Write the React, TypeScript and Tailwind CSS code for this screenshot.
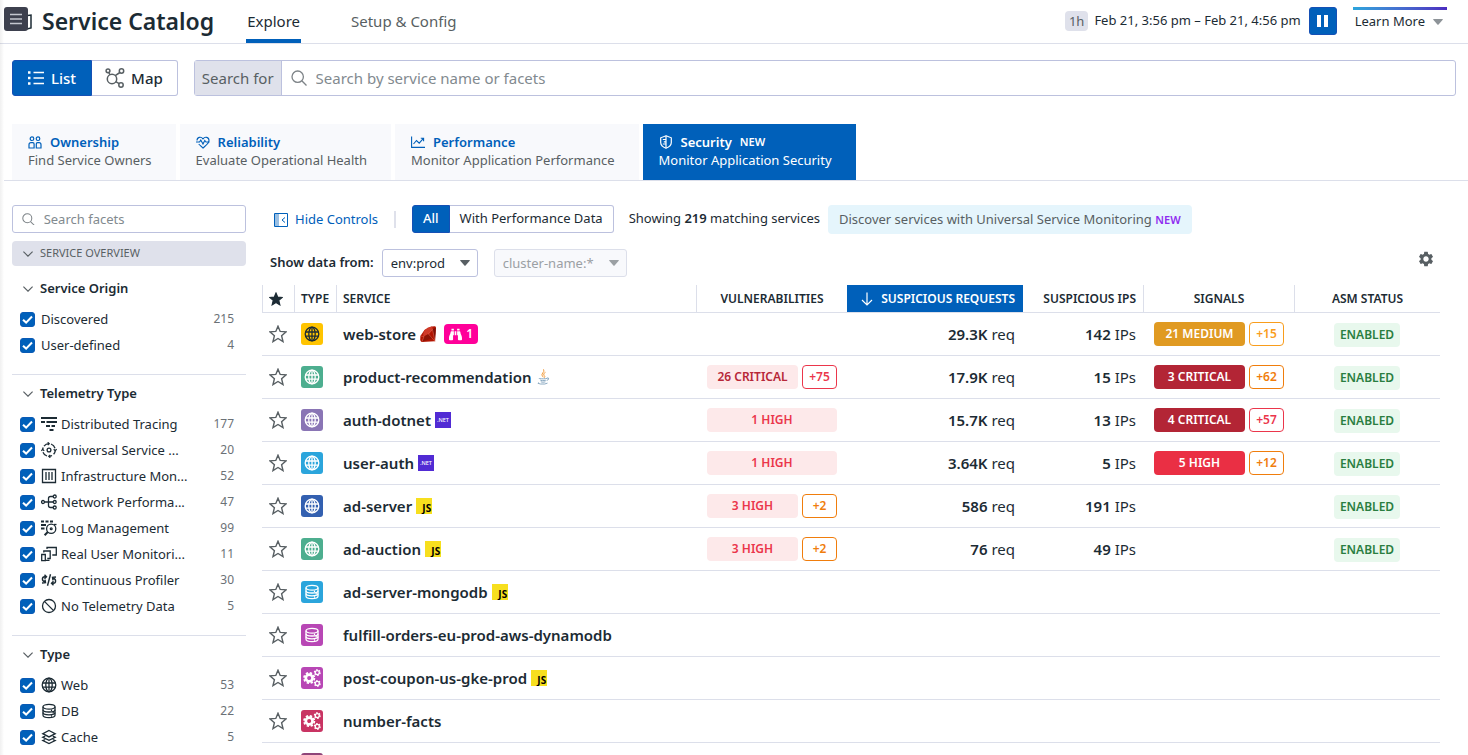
import type { ReactNode } from "react";
import { FaBinoculars } from "react-icons/fa";
import { MdSettings } from "react-icons/md";

type IconProps = { className?: string };

const stroke = {
  fill: "none",
  stroke: "currentColor",
  strokeWidth: 1.3,
} as const;

function GlobeIcon({ className }: IconProps) {
  return (
    <svg viewBox="0 0 16 16" className={className} {...stroke} aria-hidden="true">
      <circle cx="8" cy="8" r="6.8" />
      <ellipse cx="8" cy="8" rx="3.2" ry="6.8" />
      <path d="M8 1.2v13.6M1.5 6h13M1.5 10.2h13" />
    </svg>
  );
}

function DatabaseIcon({ className }: IconProps) {
  return (
    <svg viewBox="0 0 16 16" className={className} {...stroke} aria-hidden="true">
      <ellipse cx="8" cy="3.7" rx="6" ry="2.4" />
      <path d="M2 3.7v8.6c0 1.3 2.7 2.4 6 2.4s6-1.1 6-2.4V3.7" />
      <path d="M2 6.7c0 1.3 2.7 2.3 6 2.3s6-1 6-2.3M2 9.6c0 1.3 2.7 2.3 6 2.3s6-1 6-2.3" />
      <path d="M10.5 6.5v1.500M12.200 9v1.500M10.500 12.200v1.500" strokeWidth="1.200" />
    </svg>
  );
}

function GearsIcon({ className }: IconProps) {
  return (
    <svg viewBox="0 0 16 16" className={className} fill="none" stroke="currentColor" aria-hidden="true">
      <circle cx="5.500" cy="8" r="3" strokeWidth="2.400" />
      <circle cx="5.500" cy="8" r="4.600" strokeWidth="1.600" strokeDasharray="2.100 1.510" />
      <circle cx="12.700" cy="3.200" r="1.800" strokeWidth="1.200" />
      <circle cx="12.700" cy="3.200" r="2.600" strokeWidth="1" strokeDasharray="1.350 1.370" />
      <circle cx="12.700" cy="12.800" r="1.800" strokeWidth="1.200" />
      <circle cx="12.700" cy="12.800" r="2.600" strokeWidth="1" strokeDasharray="1.350 1.370" />
    </svg>
  );
}

function LayersIcon({ className }: IconProps) {
  return (
    <svg viewBox="0 0 16 16" className={className} {...stroke} aria-hidden="true">
      <path d="M8 1.5 14.2 4.700 8 7.900 1.800 4.700Z" />
      <path d="M4.200 7.200 1.800 8.300 8 11.300l6.200-3-2.400-1.100M4.200 10.500l-2.400 1.100L8 14.600l6.200-3-2.400-1.100" />
    </svg>
  );
}

function TracingIcon({ className }: IconProps) {
  return (
    <svg viewBox="0 0 16 16" className={className} fill="none" stroke="currentColor" strokeWidth="1.800" aria-hidden="true">
      <path d="M0 2h16M0 6h4M5.500 6H16M5 10h4M10.500 10H14M8.500 14h4" />
    </svg>
  );
}

function UniversalIcon({ className }: IconProps) {
  return (
    <svg viewBox="0 0 16 16" className={className} {...stroke} aria-hidden="true">
      <circle cx="8" cy="8" r="1.900" />
      <path d="M3 4.200A6.300 6.300 0 0 1 8 1.700M10 2A6.300 6.300 0 0 1 14 6.200M14.300 8.500a6.300 6.300 0 0 1-1.700 3.800M11 13.500A6.300 6.300 0 0 1 8 14.300M6 14A6.300 6.300 0 0 1 2 10.200M1.700 7.500a6.300 6.300 0 0 1 .500-2" />
      <path d="M6.700.3 8.200 1.700 6.700 3.100M15.700 7.200 14.200 8.700l-1.500-1.500M9.300 15.700 7.800 14.300l1.500-1.400M.3 8.900 1.700 7.400l1.500 1.500" />
    </svg>
  );
}

function InfraIcon({ className }: IconProps) {
  return (
    <svg viewBox="0 0 16 16" className={className} {...stroke} aria-hidden="true">
      <path d="M1.500 1.500h13v13h-13zM5 4v8M8 4v8M11 4v8" />
    </svg>
  );
}

function NetworkIcon({ className }: IconProps) {
  return (
    <svg viewBox="0 0 16 16" className={className} {...stroke} aria-hidden="true">
      <circle cx="2" cy="8" r="1.500" />
      <circle cx="13.700" cy="2.500" r="1.500" />
      <circle cx="13.700" cy="8" r="1.500" />
      <circle cx="13.700" cy="13.500" r="1.500" />
      <path d="M3.500 8h8.700M12.200 2.500H9.500q-2 0-2 2v7q0 2 2 2h2.700" />
    </svg>
  );
}

function LogIcon({ className }: IconProps) {
  return (
    <svg viewBox="0 0 16 16" className={className} {...stroke} aria-hidden="true">
      <path d="M0 1.500h3M4.500 1.500h3M9 1.500h3M0 5h5M0 8.500h3.500" strokeWidth="1.800" />
      <circle cx="10.200" cy="8.700" r="4.600" />
      <path d="m6.800 12-3.200 3.200" strokeWidth="2" />
      <circle cx="10.200" cy="8.700" r=".9" />
      <path d="M13 4.500h2.500" />
    </svg>
  );
}

function RumIcon({ className }: IconProps) {
  return (
    <svg viewBox="0 0 16 16" className={className} {...stroke} aria-hidden="true">
      <path d="M.7 8.500h3.600v6.200H.700zM2.800 6.500V5h6.400v7.500H6.300M6 3V1.500h9.300V9h-4M4.500 14.300h4" />
    </svg>
  );
}

function ProfilerIcon({ className }: IconProps) {
  return (
    <svg viewBox="0 0 16 16" className={className} fill="none" stroke="currentColor" strokeWidth="1.400" aria-hidden="true">
      <path d="M9.500 2.300 6.500 13.700" />
      <path d="M5.300 4.700H3.700Q1.400 4.700 1.400 7t2.300 2.500M3.500 2.700l2 2-2 2M1 11l3.500-.3-.5-3" />
      <path d="M10.700 11.300h1.600q2.300 0 2.300-2.300t-2.300-2.500M12.500 13.300l-2-2 2-2M15 5l-3.500.3.500 3" />
    </svg>
  );
}

function NoneIcon({ className }: IconProps) {
  return (
    <svg viewBox="0 0 16 16" className={className} {...stroke} aria-hidden="true">
      <circle cx="8" cy="8" r="6.500" />
      <path d="m3.400 3.400 9.200 9.200" />
    </svg>
  );
}

function SearchIcon({ className }: IconProps) {
  return (
    <svg viewBox="0 0 16 16" className={className} fill="none" stroke="currentColor" strokeWidth="1.300" aria-hidden="true">
      <circle cx="6.700" cy="6.700" r="5.700" />
      <path d="m10.800 10.800 4.700 4.700" />
    </svg>
  );
}

function ChevronIcon({ className }: IconProps) {
  return (
    <svg viewBox="0 0 10 6" className={className} fill="none" stroke="currentColor" strokeWidth="1.200" aria-hidden="true">
      <path d="m.4.6 4.600 4.500L9.600.6" />
    </svg>
  );
}

function CaretIcon({ className }: IconProps) {
  return (
    <svg viewBox="0 0 10 6" className={className} fill="currentColor" aria-hidden="true">
      <path d="M.7 0h8.600q.9 0 .4.700L5.600 5.500q-.6.6-1.200 0L.3.700Q-.2 0 .7 0Z" />
    </svg>
  );
}

function StarIcon({ className, filled = false }: IconProps & { filled?: boolean }) {
  return (
    <svg
      viewBox="0 0 18 18"
      className={className}
      fill={filled ? "currentColor" : "none"}
      stroke="currentColor"
      strokeWidth="1.400"
      aria-hidden="true"
    >
      <path d="m9 1.200 2.200 5.200 5.900.500-4.500 3.800 1.400 5.900L9 13.500l-5 3.100 1.400-5.900L.9 6.900l5.900-.500Z" />
    </svg>
  );
}

function ListIcon({ className }: IconProps) {
  return (
    <svg viewBox="0 0 16 14" className={className} fill="none" stroke="currentColor" strokeWidth="1.300" aria-hidden="true">
      <path d="M0 1.500h2.500M0 7h2.500M0 12.500h2.500" strokeWidth="2.400" />
      <path d="M5.500 1.500H16M5.500 7H16M5.500 12.500H16" />
    </svg>
  );
}

function MapIcon({ className }: IconProps) {
  return (
    <svg viewBox="0 0 20 20" className={className} {...stroke} strokeWidth={1.500} aria-hidden="true">
      <circle cx="7" cy="11" r="4.700" />
      <circle cx="3" cy="2.800" r="1.900" />
      <circle cx="16.500" cy="3" r="2.200" />
      <circle cx="16" cy="17" r="2.200" />
      <path d="m3.800 4.500 1.100 2.300M10.200 7.600l4.700-3.100M10.700 13.700l3.500 2" />
    </svg>
  );
}

function OwnershipIcon({ className }: IconProps) {
  return (
    <svg viewBox="0 0 14 13" className={className} {...stroke} strokeWidth={1.200} aria-hidden="true">
      <circle cx="4" cy="2.700" r="1.800" />
      <circle cx="10" cy="2.700" r="1.800" />
      <path d="M1 12V8.700q0-2 2-2h1.800q1.300 0 1.300 1.300v4zM8.300 12H13V8.700q0-2-2-2H9.600q-1.300 0-1.300 1.300z" />
    </svg>
  );
}

function HeartIcon({ className }: IconProps) {
  return (
    <svg viewBox="0 0 14 13" className={className} {...stroke} strokeWidth={1.100} aria-hidden="true">
      <path d="M1 4.500C1 1 5 .2 7 2.800 9 .2 13 1 13 4.500c0 3-4 5.500-6 7.500-1.200-1.200-3-2.500-4.300-4" />
      <path d="M0 6h3.500l1.300-2 2.200 4 1.800-3.500L10 6h3.500" />
    </svg>
  );
}

function ChartIcon({ className }: IconProps) {
  return (
    <svg viewBox="0 0 14 12" className={className} {...stroke} strokeWidth={1.100} aria-hidden="true">
      <path d="M.6.5v10.900H14M2.500 8 5.500 4.500l2.700 2.700 4-4.500M9.800 2.300h2.800v2.900" />
    </svg>
  );
}

function ShieldIcon({ className }: IconProps) {
  return (
    <svg viewBox="0 0 14 14" className={className} {...stroke} strokeWidth={1.200} aria-hidden="true">
      <path d="M7 .8 12.300 2.800v4.700q0 3.800-5.300 5.700Q1.700 11.300 1.700 7.500V2.800Z" />
      <path d="M7 .8v12.400M3.800 4.500H7M4.800 6.800H7M3.800 9H7" />
    </svg>
  );
}

function HideControlsIcon({ className }: IconProps) {
  return (
    <svg viewBox="0 0 14 14" className={className} fill="none" stroke="currentColor" strokeWidth="1" aria-hidden="true">
      <path d="M1 1h4v12H1z" fill="currentColor" fillOpacity=".4" stroke="none" />
      <path d="M.5.5h13v13H.500zM11 4.500 8 7l3 2.500" />
    </svg>
  );
}

function RubyIcon() {
  return (
    <svg viewBox="0 0 16 16" className="size-4" aria-hidden="true">
      <path d="M11.500.4 15 .200q.9.300.9 1.200L15 15.300 1.600 16Q.2 15.600.2 13.600L.4 10 4.500 4Z" fill="#b11401" />
      <path d="M4.500 4Q8 .500 11.500.4q1.800.6 1 3L8.500 8 4 10.500Q2 9 4.500 4Z" fill="#cf3a28" />
      <path d="m12.500 3.400 3.400-2L15 15.300Z" fill="#7c0f05" />
      <path d="m4 10.500 4.500-2.500 4.500 4L2 15.700Z" fill="#8d1405" />
      <path d="M.4 10 4 10.500 2 15.700M8.500 8l4-4.600L15 15.300 8.500 8" fill="none" stroke="#e8755f" strokeWidth=".500" />
    </svg>
  );
}

function JavaIcon() {
  return (
    <svg viewBox="0 0 16 16" className="size-4" fill="none" aria-hidden="true">
      <path d="M8.500.3q1.300 2-.8 3.700t.6 4.300M10.500 3.300Q7.500 4.700 9 6.300t.4 2.400" stroke="#f0932b" strokeWidth=".9" />
      <path d="M4.500 9q-1.500.9 4 .8 2.500-.1 3.700-.5M5.300 11.200q1 .9 5.500.1M5.800 12.800q1.400.8 4.600.1M12 9q2-.4 1.700 1-.3 1-2 1.400M3.500 13.500q-2 .9 2 1.500 5 .5 7-.9" stroke="#7ea0bb" strokeWidth=".9" />
    </svg>
  );
}

function NetIcon() {
  return (
    <svg viewBox="0 0 16 16" className="size-4" aria-label=".NET">
      <rect width="16" height="16" fill="#512bd4" />
      <text x="8" y="10.200" textAnchor="middle" fontSize="5.500" fontFamily="Noto Sans, sans-serif" fontWeight="500" fill="#fff">
        .NET
      </text>
    </svg>
  );
}

function JsIcon() {
  return (
    <svg viewBox="0 0 16 16" className="size-4" aria-label="JS">
      <rect width="16" height="16" fill="#f7df1e" />
      <text x="15.200" y="14.300" textAnchor="end" fontSize="10" fontFamily="Noto Sans, sans-serif" fontWeight="700" fill="#000">
        JS
      </text>
    </svg>
  );
}

function Checkbox({ id }: { id: string }) {
  return (
    <span className="grid size-[15px] shrink-0">
      <input
        id={id}
        type="checkbox"
        defaultChecked
        className="peer col-start-1 row-start-1 size-[15px] appearance-none rounded-[3px] border border-[#bcc1de] checked:border-[#0a5ab5] checked:bg-[#0060ba]"
      />
      <svg
        viewBox="0 0 14 14"
        className="pointer-events-none invisible col-start-1 row-start-1 size-[15px] peer-checked:visible"
        fill="none"
        stroke="#fff"
        strokeWidth="1.900"
        aria-hidden="true"
      >
        <path d="m2.800 7.200 2.900 2.700 5.500-5.700" />
      </svg>
    </span>
  );
}

type Facet = { label: string; count: number; icon?: (p: IconProps) => ReactNode };

const facetGroups: { title: string; facets: Facet[] }[] = [
  {
    title: "Service Origin",
    facets: [
      { label: "Discovered", count: 215 },
      { label: "User-defined", count: 4 },
    ],
  },
  {
    title: "Telemetry Type",
    facets: [
      { label: "Distributed Tracing", count: 177, icon: TracingIcon },
      { label: "Universal Service ...", count: 20, icon: UniversalIcon },
      { label: "Infrastructure Mon...", count: 52, icon: InfraIcon },
      { label: "Network Performa...", count: 47, icon: NetworkIcon },
      { label: "Log Management", count: 99, icon: LogIcon },
      { label: "Real User Monitori...", count: 11, icon: RumIcon },
      { label: "Continuous Profiler", count: 30, icon: ProfilerIcon },
      { label: "No Telemetry Data", count: 5, icon: NoneIcon },
    ],
  },
  {
    title: "Type",
    facets: [
      { label: "Web", count: 53, icon: GlobeIcon },
      { label: "DB", count: 22, icon: DatabaseIcon },
      { label: "Cache", count: 5, icon: LayersIcon },
    ],
  },
];

function FacetGroup({ title, facets }: { title: string; facets: Facet[] }) {
  return (
    <section className="border-b border-[#dcdfea] pt-2 pb-4">
      <h2>
        <button type="button" className="flex h-[22px] items-center gap-[7px] pl-[11px] text-[13px] font-semibold">
          <ChevronIcon className="w-[10px] text-[#585f63]" />
          {title}
        </button>
      </h2>
      <ul className="mt-[6px]">
        {facets.map(({ label, count, icon: Icon }) => {
          const id = `${title}-${label}`.toLowerCase().replace(/[^a-z]+/g, "-");
          return (
            <li key={label} className="flex h-[26px] items-center pr-3 pl-2">
              <Checkbox id={id} />
              <label htmlFor={id} className="flex flex-1 items-center gap-1 pl-[6px] text-[13px] leading-[18px]">
                {Icon && <Icon className="size-4" />}
                {label}
              </label>
              <span className="text-xs text-[#6b7176]">{count}</span>
            </li>
          );
        })}
      </ul>
    </section>
  );
}

const viewTabs = [
  { title: "Ownership", text: "Find Service Owners", icon: OwnershipIcon },
  { title: "Reliability", text: "Evaluate Operational Health", icon: HeartIcon },
  { title: "Performance", text: "Monitor Application Performance", icon: ChartIcon },
  { title: "Security", text: "Monitor Application Security", icon: ShieldIcon, isNew: true, active: true },
];

type Badge = { label: string; tone: string; more?: string; moreTone?: string };
type Service = {
  name?: string;
  kind: "web" | "db" | "gears";
  tile: string;
  lang?: ReactNode;
  watchers?: number;
  vuln?: Badge;
  requests?: string;
  ips?: string;
  signal?: Badge;
};

const redOutline = "border-[#eb364b] text-[#eb364b]";
const orangeOutline = "border-[#f07d0c] text-[#f07d0c]";
const amberOutline = "border-[#f99d1c] text-[#f99d1c]";
const softHigh = "bg-[#fde9ea] text-[#eb364b]";
const softCritical = "bg-[#fde9ea] text-[#b72738]";
const critical = "bg-[#b32535] text-white";

const services: Service[] = [
  {
    name: "web-store", kind: "web", tile: "bg-[#ffc400] text-[#1c2b34]", lang: <RubyIcon />, watchers: 1,
    requests: "29.3K", ips: "142",
    signal: { label: "21 MEDIUM", tone: "bg-[#e09a22] text-white", more: "+15", moreTone: amberOutline },
  },
  {
    name: "product-recommendation", kind: "web", tile: "bg-[#4dae8f] text-white", lang: <JavaIcon />,
    vuln: { label: "26 CRITICAL", tone: softCritical, more: "+75", moreTone: redOutline },
    requests: "17.9K", ips: "15",
    signal: { label: "3 CRITICAL", tone: critical, more: "+62", moreTone: orangeOutline },
  },
  {
    name: "auth-dotnet", kind: "web", tile: "bg-[#8a75b5] text-white", lang: <NetIcon />,
    vuln: { label: "1 HIGH", tone: softHigh }, requests: "15.7K", ips: "13",
    signal: { label: "4 CRITICAL", tone: critical, more: "+57", moreTone: redOutline },
  },
  {
    name: "user-auth", kind: "web", tile: "bg-[#2ba5dc] text-white", lang: <NetIcon />,
    vuln: { label: "1 HIGH", tone: softHigh }, requests: "3.64K", ips: "5",
    signal: { label: "5 HIGH", tone: "bg-[#ea2f44] text-white", more: "+12", moreTone: orangeOutline },
  },
  {
    name: "ad-server", kind: "web", tile: "bg-[#3360b0] text-white", lang: <JsIcon />,
    vuln: { label: "3 HIGH", tone: softHigh, more: "+2", moreTone: orangeOutline }, requests: "586", ips: "191",
  },
  {
    name: "ad-auction", kind: "web", tile: "bg-[#4dae8f] text-white", lang: <JsIcon />,
    vuln: { label: "3 HIGH", tone: softHigh, more: "+2", moreTone: orangeOutline }, requests: "76", ips: "49",
  },
  { name: "ad-server-mongodb", kind: "db", tile: "bg-[#2ba5dc] text-white", lang: <JsIcon /> },
  { name: "fulfill-orders-eu-prod-aws-dynamodb", kind: "db", tile: "bg-[#b847b5] text-white" },
  { name: "post-coupon-us-gke-prod", kind: "gears", tile: "bg-[#b847b5] text-white", lang: <JsIcon /> },
  { name: "number-facts", kind: "gears", tile: "bg-[#c93463] text-white" },
  { kind: "gears", tile: "bg-[#8f4579] text-white" },
];

function BadgePair({ badge }: { badge?: Badge }) {
  if (!badge) return null;
  return (
    <div className="flex gap-1 pr-[10px] pl-[11px] text-xs leading-6 font-semibold">
      <span className={`h-6 flex-1 rounded text-center ${badge.tone}`}>{badge.label}</span>
      {badge.more && (
        <span className={`h-6 w-[35px] rounded border text-center leading-[22px] ${badge.moreTone}`}>{badge.more}</span>
      )}
    </div>
  );
}

function KindIcon({ kind }: { kind: Service["kind"] }) {
  if (kind === "web") return <GlobeIcon className="size-4" />;
  if (kind === "db") return <DatabaseIcon className="size-4" />;
  return <GearsIcon className="size-[18px]" />;
}

function ServiceTable() {
  return (
    <table className="mt-2 w-full table-fixed border-separate border-spacing-0">
      <colgroup>
        <col className="w-8" />
        <col className="w-[42px]" />
        <col />
        <col className="w-[151px]" />
        <col className="w-[176px]" />
        <col className="w-[120px]" />
        <col className="w-[151px]" />
        <col className="w-[146px]" />
      </colgroup>
      <thead>
        <tr className="h-7 text-xs *:border-b *:border-[#dcdfea]">
          <th className="border-l" aria-label="Favorite">
            <StarIcon filled className="ml-[6px] size-[14px]" />
          </th>
          <th className="border-l pl-[6px] text-left font-semibold">TYPE</th>
          <th className="border-l pl-[6px] text-left font-semibold">SERVICE</th>
          <th className="border-l font-semibold">VULNERABILITIES</th>
          <th className="bg-[#0060ba] pr-2 font-semibold text-white" aria-sort="descending">
            <button type="button" className="flex w-full items-center justify-end gap-2">
              <svg viewBox="0 0 12 14" className="w-3" fill="none" stroke="currentColor" strokeWidth="1.200" aria-hidden="true">
                <path d="M6 .5v12.500M1 8l5 5 5-5" />
              </svg>
              SUSPICIOUS REQUESTS
            </button>
          </th>
          <th className="pr-[7px] text-right font-semibold whitespace-nowrap">SUSPICIOUS IPS</th>
          <th className="border-l font-semibold">SIGNALS</th>
          <th className="border-l font-semibold">ASM STATUS</th>
        </tr>
      </thead>
      <tbody>
        {services.map((s, i) => (
          <tr key={i} className="h-[43px] text-[15px] *:border-b *:border-[#dcdfea]">
            <td className="pl-[7px]">
              <button type="button" aria-label="Favorite" className="block text-[#585f63]">
                <StarIcon className="size-[18px]" />
              </button>
            </td>
            <td className="pl-[7px]">
              <span className={`flex size-[22px] items-center justify-center rounded-[3px] ${s.tile}`}>
                <KindIcon kind={s.kind} />
              </span>
            </td>
            <td className="pl-[7px]">
              <div className="flex items-center gap-1">
                {s.name && <a href="#service" className="font-semibold">{s.name}</a>}
                {s.lang}
                {s.watchers && (
                  <span className="ml-1 flex h-5 items-center gap-1 rounded bg-[#ff0099] px-[5px] text-xs font-semibold text-white">
                    <FaBinoculars className="size-[13px]" />
                    {s.watchers}
                  </span>
                )}
              </div>
            </td>
            <td><BadgePair badge={s.vuln} /></td>
            <td className="pr-2 text-right">{s.requests && <><b className="font-semibold">{s.requests}</b> req</>}</td>
            <td className="pr-[7px] text-right">{s.ips && <><b className="font-semibold">{s.ips}</b> IPs</>}</td>
            <td><BadgePair badge={s.signal} /></td>
            <td className="text-center">
              {s.requests && (
                <span className="inline-block h-6 rounded bg-[#e8f8ed] px-[6px] text-xs leading-6 font-semibold text-[#2a7e41]">
                  ENABLED
                </span>
              )}
            </td>
          </tr>
        ))}
      </tbody>
    </table>
  );
}

export default function App() {
  return (
    <div className="relative h-screen overflow-hidden bg-white font-['Noto_Sans',sans-serif] text-[#1c2b34]">
      <header className="flex h-11 items-center justify-between border-b border-[#dcdfea] pr-[21px]">
        <div className="flex h-full items-center">
          <svg viewBox="0 0 20 20" className="ml-3 w-5" fill="none" stroke="#1c2b34" strokeWidth="1.500" aria-hidden="true">
            <path d="M2 3h8l2 1 7-1v13l-8 2-9-2z" />
          </svg>
          <h1 className="ml-[10px] text-[23px] font-semibold">Service Catalog</h1>
          <nav className="ml-8 flex h-full gap-[50px] text-[15px]">
            <a href="#explore" className="flex items-center border-b-4 border-[#0060ba] px-px pt-[3px]">Explore</a>
            <a href="#setup" className="flex items-center border-b-4 border-transparent pt-[3px] text-[#585f63]">Setup &amp; Config</a>
          </nav>
        </div>
        <div className="flex items-center pb-[2px] text-[13px]">
          <span className="rounded bg-[#dfe1eb] px-1 leading-5 text-[#585f63]">1h</span>
          <span className="ml-[6px]">Feb 21, 3:56 pm – Feb 21, 4:56 pm</span>
          <button type="button" aria-label="Pause" className="ml-2 flex size-7 items-center justify-center gap-[3px] rounded-[3px] border border-[#1550b5] bg-[#0060ba]">
            <span className="h-3 w-1 bg-white" />
            <span className="h-3 w-1 bg-white" />
          </button>
          <button type="button" className="ml-4 flex h-7 flex-col">
            <span className="h-[3px] w-full bg-linear-to-r from-[#2ba5dc] to-[#4b2bc0]" />
            <span className="flex flex-1 items-center gap-2 pr-1 pl-[2px]">
              Learn More
              <CaretIcon className="w-[10px] text-[#8d9398]" />
            </span>
          </button>
        </div>
      </header>
      <button type="button" aria-label="Open menu" className="absolute top-[7px] left-1 flex size-6 items-center justify-center rounded-[3px] bg-[#3d404e]">
        <svg viewBox="0 0 12 12" className="w-3" stroke="#c4c6cf" strokeWidth="1.500" aria-hidden="true">
          <path d="M0 1.500h12M0 6h12M0 10.500h12" />
        </svg>
      </button>

      <div className="mx-3 mt-4 flex h-9 gap-4 text-[15px]">
        <div className="flex">
          <button type="button" className="flex items-center gap-[7px] rounded-l-[3px] border border-[#1550b5] bg-[#0060ba] px-[15px] font-medium text-white">
            <ListIcon className="w-4" />
            List
          </button>
          <button type="button" className="flex items-center gap-[6px] rounded-r-[3px] border border-l-0 border-[#bcc1de] pr-[14px] pl-[13px] font-medium">
            <MapIcon className="w-5 text-[#585f63]" />
            Map
          </button>
        </div>
        <div className="flex flex-1 rounded-[3px] border border-[#bcc1de]">
          <label htmlFor="service-search" className="flex items-center border-r border-[#bcc1de] bg-[#dfe1eb] px-[7px] text-[#585f63]">Search for</label>
          <SearchIcon className="ml-[9px] w-4 text-[#7d8387]" />
          <input
            id="service-search"
            type="text"
            placeholder="Search by service name or facets"
            className="ml-[9px] flex-1 outline-none placeholder:text-[#828a8f]"
          />
        </div>
      </div>

      <nav className="mt-7 ml-1 flex gap-1 border-b border-[#dcdfea] pl-2 text-[13px] leading-[18px]">
        {viewTabs.map(({ title, text, icon: Icon, isNew, active }) => (
          <a
            key={title}
            href={`#${title.toLowerCase()}`}
            className={`h-14 pt-[9px] pr-6 pl-4 ${active ? "bg-[#0060ba] text-white" : "bg-[#f8f9fc] text-[#585f63]"}`}
          >
            <span className={`flex items-center gap-2 font-semibold ${active ? "" : "text-[#0060ba]"}`}>
              <Icon className="w-[14px]" />
              {title}
              {isNew && <span className="text-[11px]">NEW</span>}
            </span>
            <span className="block">{text}</span>
          </a>
        ))}
      </nav>

      <div className="flex gap-4 pt-6 pr-7 pl-3">
        <aside className="w-[234px] shrink-0">
          <div className="flex h-7 items-center rounded-[3px] border border-[#bcc1de] pl-[9px]">
            <SearchIcon className="w-[14px] text-[#7d8387]" />
            <input
              type="text"
              aria-label="Search facets"
              placeholder="Search facets"
              className="ml-[9px] w-full pt-px text-[13px] outline-none placeholder:text-[#828a8f]"
            />
          </div>
          <button type="button" className="mt-2 mb-1 flex h-[25px] w-full items-center gap-[7px] rounded bg-[#dfe1eb] pl-[11px] text-[11px] text-[#585f63]">
            <ChevronIcon className="w-[10px]" />
            SERVICE OVERVIEW
          </button>
          {facetGroups.map((g) => (
            <FacetGroup key={g.title} {...g} />
          ))}
        </aside>

        <main className="min-w-0 flex-1">
          <div className="flex h-7 items-center pl-3 text-[13px]">
            <button type="button" className="flex items-center gap-[7px] pt-px text-[#0060ba]">
              <HideControlsIcon className="w-[14px]" />
              Hide Controls
            </button>
            <span className="ml-4 h-[17px] w-[2px] bg-[#dfe1eb]" />
            <div className="ml-4 flex h-7">
              <button type="button" className="rounded-l-[3px] border border-[#1550b5] bg-[#0060ba] px-[10px] font-medium text-white">All</button>
              <button type="button" className="rounded-r-[3px] border border-l-0 border-[#bcc1de] px-[10px]">With Performance Data</button>
            </div>
            <p className="ml-[15px]">
              Showing <b className="font-semibold">219</b> matching services
            </p>
            <a href="#usm" className="ml-2 rounded bg-[#e5f5fc] px-[11px] leading-7 text-[#585f63]">
              Discover services with Universal Service Monitoring{" "}
              <span className="text-[11px] font-semibold text-[#8f2bf0]">NEW</span>
            </a>
          </div>
          <div className="mt-4 flex h-7 items-center pr-[5px] pl-2 text-[13px]">
            <span className="font-semibold">Show data from:</span>
            <div className="ml-2 grid h-7 w-24 items-center">
              <select aria-label="Environment" className="col-start-1 row-start-1 h-7 w-full appearance-none rounded-[3px] border border-[#bcc1de] pt-px pl-2">
                <option>env:prod</option>
              </select>
              <CaretIcon className="pointer-events-none col-start-1 row-start-1 mr-2 w-[10px] justify-self-end text-[#585f63]" />
            </div>
            <div className="ml-4 grid h-7 w-[133px] items-center">
              <select aria-label="Cluster" disabled className="col-start-1 row-start-1 h-7 w-full appearance-none rounded-[3px] border border-[#dcdfea] bg-[#f8f9fc] pt-px pl-2 text-[#9ba0a4] opacity-100">
                <option>cluster-name:*</option>
              </select>
              <CaretIcon className="pointer-events-none col-start-1 row-start-1 mr-2 w-[10px] justify-self-end text-[#9ba0a4]" />
            </div>
            <button type="button" aria-label="Table settings" className="mb-2 ml-auto text-[#585f63]">
              <MdSettings className="size-[18px]" />
            </button>
          </div>
          <ServiceTable />
        </main>
      </div>
      <div className="pointer-events-none absolute inset-y-0 left-0 w-1 bg-linear-to-r from-black/6 to-transparent" />
    </div>
  );
}
